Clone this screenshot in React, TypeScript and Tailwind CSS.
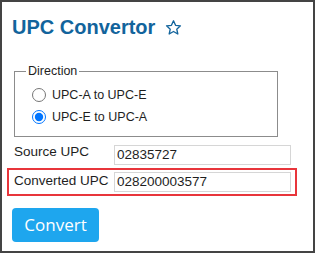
import React from "react";

function StarIcon() {
  return (
    <svg width="17" height="17" viewBox="0 0 24 24" fill="none" stroke="#12649c" strokeWidth="1.9" strokeLinejoin="round">
      <path d="M12 2.5l2.9 6.4 6.9.7-5.2 4.7 1.5 6.9L12 17.6l-6.1 3.6 1.5-6.9-5.2-4.7 6.9-.7z" />
    </svg>
  );
}

export default function App() {
  return (
    <div className="w-[315px] h-[253px] border-2 border-[#444] bg-white flex flex-col font-['Liberation_Sans',Arial,sans-serif] text-[#1e1e1e]">
      <div className="pt-[13px] pl-[10px] flex items-center gap-[10px] h-[37px]">
        <h1 className="text-[20px] leading-[24px] font-bold text-[#12649c]">UPC Convertor</h1>
        <span className="mt-[1px]">
          <StarIcon />
        </span>
      </div>

      <fieldset className="mt-[24px] ml-[12px] w-[264px] border border-[#8c8c8c] pl-[11px] pb-[8px]">
        <legend className="px-[2px] text-[12.5px] leading-[16px]">Direction</legend>
        <div className="pl-[6px] pt-[5px] flex flex-col text-[12.5px]">
          <label className="h-[22px] flex items-center gap-[6px]">
            <input type="radio" name="direction" className="w-[14px] h-[14px] m-0" />
            <span>UPC-A to UPC-E</span>
          </label>
          <label className="h-[22px] flex items-center gap-[6px]">
            <input type="radio" name="direction" defaultChecked className="w-[14px] h-[14px] m-0" />
            <span>UPC-E to UPC-A</span>
          </label>
        </div>
      </fieldset>

      <div className="mt-[8px] ml-[12px] flex items-start h-[20px] text-[13.5px]">
        <span className="w-[100px] leading-[16px] -mt-px">Source UPC</span>
        <input
          readOnly
          value="02835727"
          className="w-[177px] h-[20px] border border-[#d6d6d6] px-[2px] text-[13.5px] outline-none"
        />
      </div>

      <div className="mt-[3px] ml-[5px] w-[290px] border-2 border-[#e8353b] py-[2px] pl-[5px] flex items-start text-[13.5px]">
        <span className="w-[100px] leading-[16px] pt-[1px]">Converted UPC</span>
        <input
          readOnly
          value="028200003577"
          className="w-[177px] h-[20px] border border-[#d6d6d6] px-[2px] text-[13.5px] outline-none"
        />
      </div>

      <div className="mt-[12px] ml-[10px]">
        <button
          type="button"
          className="w-[87px] h-[34px] rounded-[4px] bg-[#1ea6ee] text-white text-[17px] font-['Open_Sans',sans-serif]"
        >
          Convert
        </button>
      </div>
    </div>
  );
}
